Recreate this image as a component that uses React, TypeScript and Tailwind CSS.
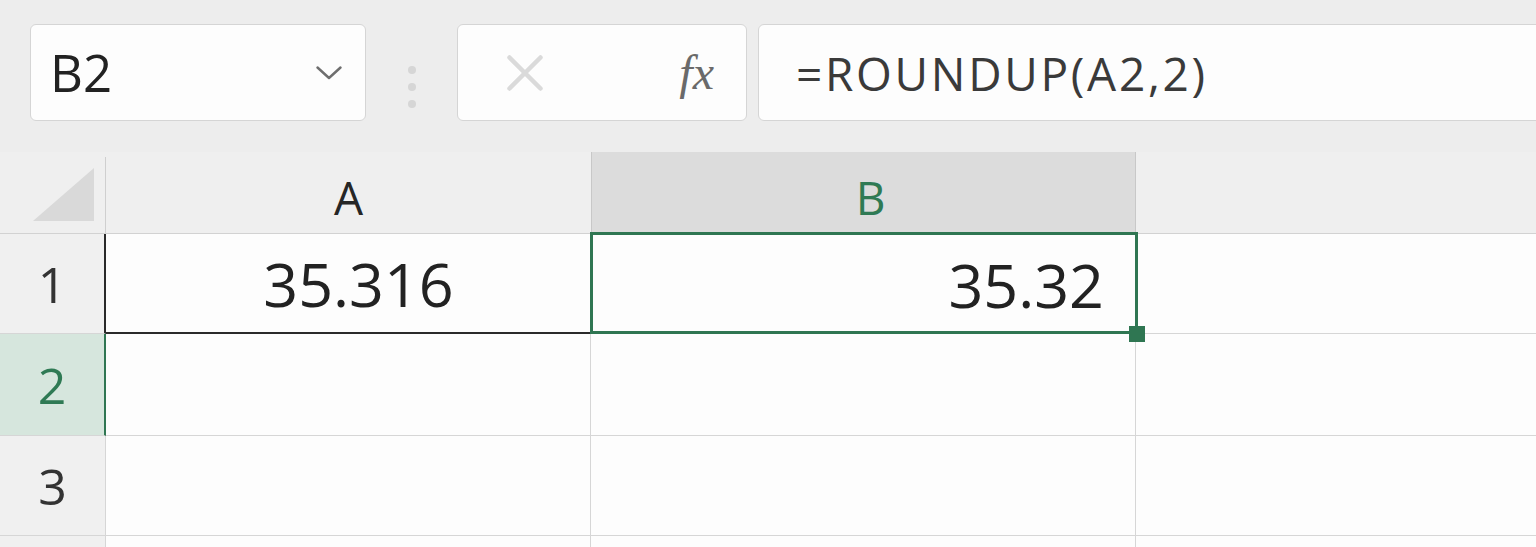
import React from "react";

const font = { fontFamily: '"Open Sans", "Noto Sans", sans-serif' };

function Chevron() {
  return (
    <svg width="26" height="14" viewBox="0 0 26 14" fill="none">
      <path d="M1.5 1.5 L13 12 L24.5 1.5" stroke="#6e6e6e" strokeWidth="2.4" strokeLinecap="round" strokeLinejoin="round" />
    </svg>
  );
}

function CrossIcon() {
  return (
    <svg width="36" height="36" viewBox="0 0 36 36" fill="none">
      <path d="M2.5 2.5 L33.5 33.5 M33.5 2.5 L2.5 33.5" stroke="#dadada" strokeWidth="4.5" strokeLinecap="round" />
    </svg>
  );
}

function Toolbar() {
  return (
    <div className="flex h-[152px] bg-[#ededed] pt-[24px] pl-[30px]">
      {/* name box */}
      <div className="flex h-[97px] w-[336px] shrink-0 items-center justify-between rounded-[6px] border border-[#d5d5d5] bg-[#fdfdfd] pl-[19px] pr-[23px]">
        <span className="text-[51px] leading-none text-[#222]">B2</span>
        <Chevron />
      </div>

      <div className="flex w-[91px] shrink-0 flex-col items-center justify-center gap-[9px] pb-[2px]">
        <span className="h-[8px] w-[8px] rounded-full bg-[#d6d6d6]" />
        <span className="h-[8px] w-[8px] rounded-full bg-[#d6d6d6]" />
        <span className="h-[8px] w-[8px] rounded-full bg-[#d6d6d6]" />
      </div>

      <div className="flex h-[97px] w-[290px] shrink-0 items-center justify-between rounded-[6px] border border-[#d5d5d5] bg-[#fdfdfd] pl-[49px] pr-[32px]">
        <CrossIcon />
        <span
          className="text-[48px] italic leading-none text-[#6a6a6a]"
          style={{ fontFamily: '"Liberation Serif", "DejaVu Serif", serif' }}
        >
          fx
        </span>
      </div>

      <div className="ml-[11px] flex h-[97px] w-[820px] shrink-0 items-center rounded-[6px] border border-[#d5d5d5] bg-[#fdfdfd] pl-[37px]">
        <span className="text-[46px] leading-none tracking-[2.7px] text-[#3a3a3a]">=ROUNDUP(A2,2)</span>
      </div>
    </div>
  );
}

const cols = "grid grid-cols-[106px_485px_545px_1fr]";

export default function App() {
  return (
    <div className="h-[547px] w-[1536px] overflow-hidden bg-[#ededed]" style={font}>
      <Toolbar />

      {/* column headers */}
      <div className={`${cols} h-[82px] border-b border-[#d2d2d2] bg-[#efefef]`}>
        <div className="pt-[5px]">
          <div className="flex h-full items-end justify-end border-r border-[#cfcfcf] pb-[12px] pr-[11px]">
            <svg width="61" height="53" viewBox="0 0 61 53">
              <polygon points="61,0 61,53 0,53" fill="#d9d9d9" />
            </svg>
          </div>
        </div>
        <div className="flex items-center justify-center pt-[8px] text-[46px] leading-none text-[#262626]">A</div>
        <div className="flex items-center justify-center border-x border-[#c8c8c8] bg-[#dcdcdc] pt-[8px] pl-[14px] text-[46px] leading-none text-[#2f7a54]">
          B
        </div>
        <div />
      </div>

      {/* row 1 */}
      <div className={`${cols} h-[100px] bg-[#fdfdfd]`}>
        <div className="flex items-center justify-center border-r-2 border-b border-r-[#2a2a2a] border-b-[#d6d6d6] bg-[#f0f0f0] text-[50px] leading-none text-[#333]">
          1
        </div>
        <div className="flex items-center justify-center border-b-2 border-[#2a2a2a] pl-[20px] text-[61px] leading-none text-[#222]">
          35.316
        </div>
        <div className="relative flex items-center justify-end pr-[32px] text-[61px] leading-none text-[#222]">
          35.32
          <div className="absolute -left-[1px] -right-[2px] -top-[2px] bottom-0 border-[3px] border-[#2f7652]" />
          <div className="absolute -bottom-[8px] -right-[9px] h-[16px] w-[16px] bg-[#2f7652]" />
        </div>
        <div className="border-b border-[#d6d6d6]" />
      </div>

      {/* row 2 */}
      <div className={`${cols} h-[102px] bg-[#fdfdfd]`}>
        <div className="flex items-center justify-center border-r-2 border-b border-r-[#2f7652] border-b-[#d6d6d6] bg-[#d6e6dd] text-[50px] leading-none text-[#2f7a54]">
          2
        </div>
        <div className="border-r border-b border-[#d6d6d6]" />
        <div className="border-r border-b border-[#d6d6d6]" />
        <div className="border-b border-[#d6d6d6]" />
      </div>

      {/* row 3 */}
      <div className={`${cols} h-[100px] bg-[#fdfdfd]`}>
        <div className="flex items-center justify-center border-r border-b border-[#d6d6d6] bg-[#f0f0f0] text-[50px] leading-none text-[#333]">
          3
        </div>
        <div className="border-r border-b border-[#d6d6d6]" />
        <div className="border-r border-b border-[#d6d6d6]" />
        <div className="border-b border-[#d6d6d6]" />
      </div>

      {/* row 4 (cut off) */}
      <div className={`${cols} h-[100px] bg-[#fdfdfd]`}>
        <div className="border-r border-[#d6d6d6] bg-[#f0f0f0]" />
        <div className="border-r border-[#d6d6d6]" />
        <div className="border-r border-[#d6d6d6]" />
        <div />
      </div>
    </div>
  );
}
